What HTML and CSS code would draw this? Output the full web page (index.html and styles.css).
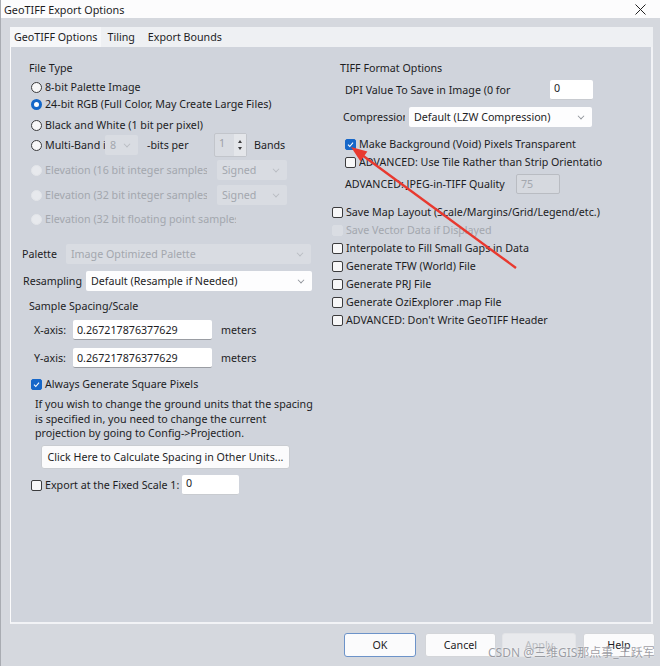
FILE: index.html
```html
<!DOCTYPE html>
<html lang="en">
<head>
  <meta charset="UTF-8" />
  <title>GeoTIFF Export Options</title>
  <link rel="stylesheet" href="styles.css">
</head>
<body>
  <div class="window">
    <div class="titlebar">
      <span>GeoTIFF Export Options</span>
      <svg class="close" width="11" height="11" viewBox="0 0 11 11"><path d="M0.5 0.5L10.5 10.5M10.5 0.5L0.5 10.5" stroke="#222" stroke-width="1"/></svg>
    </div>

    <div class="main">
      <div class="tabs">
        <span class="tab active">GeoTIFF Options</span>
        <span class="tab">Tiling</span>
        <span class="tab">Export Bounds</span>
      </div>

      <div class="panel">
        <!-- left column -->
        <div class="col left">
          <div class="row title ft">File Type</div>
          <div class="row opt r1"><span class="radio"></span>8-bit Palette Image</div>
          <div class="row opt r2"><span class="radio on"></span>24-bit RGB (Full Color, May Create Large Files)</div>
          <div class="row opt r3"><span class="radio"></span>Black and White (1 bit per pixel)</div>
          <div class="row opt multi">
            <span class="radio"></span>
            <span class="clip mb-label">Multi-Band image</span>
            <span class="select off w-bits">8<i class="chev"></i></span>
            <span class="bits-label">-bits per</span>
            <span class="spin"><span class="spin-val">1</span><span class="spin-arrows"><i class="up"></i><i class="down"></i></span></span>
            <span class="bands">Bands</span>
          </div>
          <div class="row opt off-text e16">
            <span class="radio dis"></span>
            <span class="clip elev-label">Elevation (16 bit integer samples)</span>
            <span class="select off w-signed">Signed<i class="chev"></i></span>
          </div>
          <div class="row opt off-text e32">
            <span class="radio dis"></span>
            <span class="clip elev-label">Elevation (32 bit integer samples)</span>
            <span class="select off w-signed">Signed<i class="chev"></i></span>
          </div>
          <div class="row opt off-text ef">
            <span class="radio dis"></span>
            <span class="clip elevf-label">Elevation (32 bit floating point samples)</span>
          </div>

          <div class="row pal">
            <span class="lbl w-pal">Palette</span>
            <span class="select off w-palsel">Image Optimized Palette<i class="chev"></i></span>
          </div>
          <div class="row res">
            <span class="lbl w-res">Resampling</span>
            <span class="select w-ressel">Default (Resample if Needed)<i class="chev"></i></span>
          </div>

          <div class="row title ss">Sample Spacing/Scale</div>
          <div class="row axis ax">
            <span class="lbl w-axis">X-axis:</span>
            <span class="input w-axisin">0.267217876377629</span>
            <span class="unit">meters</span>
          </div>
          <div class="row axis ay">
            <span class="lbl w-axis">Y-axis:</span>
            <span class="input w-axisin">0.267217876377629</span>
            <span class="unit">meters</span>
          </div>
          <div class="row opt sq"><span class="check on"><svg viewBox="0 0 10 10"><path d="M2.2 5.2L4.2 7.2L7.8 3" fill="none" stroke="#fff" stroke-width="1.2"/></svg></span>Always Generate Square Pixels</div>
          <p class="note">If you wish to change the ground units that the spacing<br>is specified in, you need to change the current<br>projection by going to Config-&gt;Projection.</p>
          <div class="row calc"><span class="btn w-calc">Click Here to Calculate Spacing in Other Units...</span></div>
          <div class="row opt fix">
            <span class="check"></span>
            <span class="fix-label">Export at the Fixed Scale 1:</span>
            <span class="input w-fix">0</span>
          </div>
        </div>

        <!-- right column -->
        <div class="col right">
          <div class="row title tf">TIFF Format Options</div>
          <div class="row dpi">
            <span class="wrap1 w-dpi">DPI Value To Save in Image (0 for default)</span>
            <span class="input w-dpiin">0</span>
          </div>
          <div class="row comp">
            <span class="clip w-comp">Compression</span>
            <span class="select w-compsel">Default (LZW Compression)<i class="chev"></i></span>
          </div>
          <div class="row grp mk"><span class="check on"><svg viewBox="0 0 10 10"><path d="M2.2 5.2L4.2 7.2L7.8 3" fill="none" stroke="#fff" stroke-width="1.2"/></svg></span>Make Background (Void) Pixels Transparent</div>
          <div class="row grp tile"><span class="check"></span><span class="clip w-tile">ADVANCED: Use Tile Rather than Strip Orientation</span></div>
          <div class="row grp jpeg">
            <span class="lbl w-jpeg">ADVANCED: JPEG-in-TIFF Quality</span>
            <span class="input off w-jpegin">75</span>
          </div>

          <div class="row list l1"><span class="check"></span>Save Map Layout (Scale/Margins/Grid/Legend/etc.)</div>
          <div class="row list off-text"><span class="check dis"></span>Save Vector Data if Displayed</div>
          <div class="row list"><span class="check"></span>Interpolate to Fill Small Gaps in Data</div>
          <div class="row list"><span class="check"></span>Generate TFW (World) File</div>
          <div class="row list"><span class="check"></span>Generate PRJ File</div>
          <div class="row list"><span class="check"></span>Generate OziExplorer .map File</div>
          <div class="row list"><span class="check"></span>ADVANCED: Don't Write GeoTIFF Header</div>
        </div>
      </div>

      <div class="buttons">
        <span class="btn default w-ok">OK</span>
        <span class="btn w-cancel">Cancel</span>
        <span class="btn disabled w-apply">Apply</span>
        <span class="btn w-help">Help</span>
      </div>
    </div>

    <svg class="arrow" width="660" height="666" viewBox="0 0 660 666">
      <line x1="516" y1="268" x2="362" y2="155" stroke="#e8392f" stroke-width="2.4"/>
      <polygon points="351,147 367.4,151.6 360.4,161.2" fill="#e8392f"/>
    </svg>
    <div class="watermark">CSDN @三维GIS那点事_王跃军</div>
  </div>
</body>
</html>
```

FILE: styles.css
```css
* {
  margin: 0;
  padding: 0;
  box-sizing: border-box;
}

body {
  width: 660px;
  height: 666px;
  overflow: hidden;
  font-family: "Noto Sans", "Open Sans", sans-serif;
  font-size: 10.7px;
  color: #1d1d1f;
  background: #fff;
}

.window {
  position: relative;
  width: 660px;
  height: 666px;
  background: #d5d8de;
  border-left: 1px solid #a9acb2;
}

.titlebar {
  height: 18px;
  background: #fcfcfd;
  display: flex;
  align-items: center;
  justify-content: space-between;
  padding: 0 14px 0 3px;
  font-size: 10.8px;
}

.main {
  padding: 9px 7px 0 9px;
}

/* tabs */
.tabs {
  height: 20px;
  background: #eef0f3;
  display: flex;
  align-items: center;
}

.tab {
  height: 20px;
  display: flex;
  align-items: center;
  padding: 0 7px 0 6px;
}

.tab.active {
  padding: 0 4px 0 4px;
  background: #f6f7f9;
}

/* panel */
.panel {
  height: 577px;
  background: #d0d4dc;
  border-left: 1px solid #fbfbfc;
  border-right: 2px solid #f2f3f6;
  border-bottom: 2px solid #f2f3f6;
  display: flex;
  padding: 13px 0 0 10px;
}

.col.left { width: 310px; }
.col.right { width: 320px; }

.row {
  display: flex;
  align-items: center;
  white-space: nowrap;
  height: 16px;
}

.clip {
  overflow: hidden;
  white-space: nowrap;
  flex: none;
}

.wrap1 {
  flex: none;
  height: 16px;
  line-height: 16px;
  overflow: hidden;
  white-space: normal;
}

.lbl { flex: none; }

.title { padding-left: 8px; }
.opt { padding-left: 10px; }

.off-text { color: #a3a7ae; }

/* left column rows */
.r1 { margin-top: 3px; }
.r2 { margin-top: 1px; }
.r3 { margin-top: 5px; }
.multi { height: 24px; }
.e16 { height: 20px; margin-top: 3px; }
.e32 { height: 20px; margin-top: 5px; }
.ef { margin-top: 6px; }
.pal { height: 20px; margin-top: 17px; padding-left: 1px; }
.res { height: 20px; margin-top: 7px; padding-left: 2px; }
.ss { margin-top: 7px; }
.axis { height: 20px; padding-left: 13px; }
.ax { margin-top: 6px; }
.ay { margin-top: 8px; }
.sq { margin-top: 8px; }

.note {
  margin-top: 5px;
  padding-left: 14px;
  line-height: 14.5px;
  white-space: nowrap;
}

.calc { height: 22px; margin-top: 5px; padding-left: 20px; }
.fix { height: 23px; margin-top: 6px; }

.mb-label { width: 60px; }
.w-bits { width: 33px; }
.bits-label { width: 67px; margin-left: 9px; }
.bands { margin-left: 7px; }
.elev-label { width: 162px; }
.elevf-label { width: 191px; }
.w-signed { width: 70px; margin-left: 10px; }
.w-pal { width: 44px; }
.w-palsel { width: 245px; }
.w-res { width: 63px; }
.w-ressel { width: 226px; }
.w-axis { width: 39px; }
.w-axisin { width: 139px; }
.unit { margin-left: 9px; }
.w-calc { width: 249px; height: 22px; }
.fix-label { width: 137px; }
.w-fix { width: 57px; height: 23px; }

/* right column rows */
.right .title { padding-left: 9px; }
.dpi { height: 23px; margin-top: 2px; padding-left: 14px; }
.w-dpi { width: 205px; }
.w-dpiin { width: 43px; height: 23px; }
.comp { height: 20px; margin-top: 6px; padding-left: 12px; }
.w-comp { width: 62px; margin-right: 4px; }
.w-compsel { width: 183px; }
.grp { padding-left: 14px; }
.mk { margin-top: 9px; }
.tile { margin-top: 2px; }
.w-tile { width: 243px; }
.jpeg { height: 24px; margin-top: 2px; }
.w-jpeg { width: 171px; }
.w-jpegin { width: 44px; height: 24px; }

.list { padding-left: 1px; margin-top: 2px; }
.l1 { margin-top: 8px; }

/* controls */
.radio {
  flex: none;
  width: 11px;
  height: 11px;
  border-radius: 50%;
  border: 1px solid #3a3a3c;
  background: #f7f7f8;
  margin-right: 3px;
}

.radio.on {
  border: 3px solid #1467c8;
  background: #fff;
}

.radio.dis {
  border-color: #e3e5e9;
  background: #e7e9ed;
}

.check {
  flex: none;
  width: 11px;
  height: 11px;
  border-radius: 2px;
  border: 1px solid #3b3b3d;
  background: #f7f7f8;
  margin-right: 3px;
  display: flex;
}

.check svg { width: 100%; height: 100%; }

.check.on {
  background: #1667c9;
  border-color: #1667c9;
}

.check.dis {
  background: #dadde3;
  border-color: #dadde3;
}

.select {
  flex: none;
  position: relative;
  height: 20px;
  display: flex;
  align-items: center;
  padding-left: 5px;
  background: #fdfdfe;
  border-radius: 2px;
  overflow: hidden;
}

.select.off {
  background: #d9dce2;
  color: #a3a7ae;
}

.chev {
  position: absolute;
  right: 8px;
  top: 6px;
  width: 6px;
  height: 6px;
  border-right: 1px solid #8c9097;
  border-bottom: 1px solid #8c9097;
  transform: rotate(45deg) scale(0.8);
}

.select.off .chev { border-color: #b8bbc1; }

.input {
  flex: none;
  height: 20px;
  display: flex;
  align-items: center;
  padding-left: 4px;
  background: #fff;
  border-bottom: 1px solid #9a9da3;
  border-radius: 2px;
}

.w-dpiin, .w-fix { align-items: flex-start; padding-top: 1px; border-bottom-color: #c8cbd0; }

.input.off {
  background: #d6d9df;
  border: 1px solid #b9bcc2;
  color: #a3a7ae;
  align-items: flex-start;
  padding-top: 2px;
}

.spin {
  flex: none;
  width: 33px;
  height: 24px;
  display: flex;
  border: 1px solid #c2c5cb;
  background: #d9dce2;
  border-radius: 2px;
}

.spin-val {
  width: 19px;
  padding: 2px 0 0 4px;
  color: #9da1a8;
}

.spin-arrows {
  flex: 1;
  display: flex;
  flex-direction: column;
  align-items: center;
  justify-content: center;
  gap: 4px;
  background: #e4e6ea;
}

.spin-arrows i {
  width: 0;
  height: 0;
  border-left: 2px solid transparent;
  border-right: 2px solid transparent;
}

.spin-arrows .up { border-bottom: 3px solid #3c3c3e; }
.spin-arrows .down { border-top: 3px solid #3c3c3e; }

.btn {
  flex: none;
  display: flex;
  align-items: center;
  justify-content: center;
  height: 24px;
  background: #fbfbfc;
  border: 1px solid #d3d5d9;
  border-radius: 3px;
}

.calc .btn { border-color: #c9ccd1; }

.buttons {
  display: flex;
  margin-top: 9px;
  padding-left: 334px;
}

.btn.default { border-color: #6c93c9; }
.btn.disabled { color: #b9bcc1; background: #e9eaed; border-color: #e3e4e7; }

.w-ok { width: 72px; }
.w-cancel { width: 71px; margin-left: 9px; }
.w-apply { width: 74px; margin-left: 6px; }
.w-help { width: 72px; margin-left: 7px; }

/* overlays */
.arrow {
  position: absolute;
  left: -1px;
  top: 0;
  pointer-events: none;
}

.watermark {
  position: absolute;
  left: 487px;
  top: 643px;
  font-family: "Noto Sans", "Noto Sans CJK SC", sans-serif;
  font-size: 12px;
  color: rgba(125, 128, 136, 0.75);
  text-shadow: 0 0 2px #fff;
  white-space: nowrap;
}
```
